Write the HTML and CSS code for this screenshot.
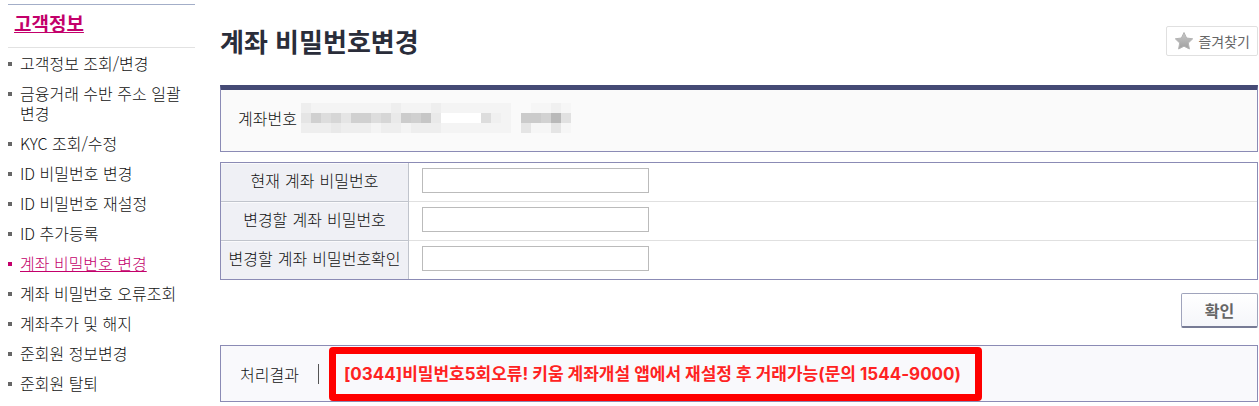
FILE: index.html
```
<!DOCTYPE html>
<html lang="ko">
<head>
  <meta charset="UTF-8">
  <meta name="viewport" content="width=device-width, initial-scale=1.0">
  <title>계좌 비밀번호변경</title>
  <link rel="stylesheet" href="styles.css">
</head>
<body>

<div class="page">
  <nav class="sidebar">
    <h2><a href="#">고객정보</a></h2>
    <ul>
      <li><a href="#">고객정보 조회/변경</a></li>
      <li><a href="#">금융거래 수반 주소 일괄 변경</a></li>
      <li><a href="#">KYC 조회/수정</a></li>
      <li><a href="#">ID 비밀번호 변경</a></li>
      <li><a href="#">ID 비밀번호 재설정</a></li>
      <li><a href="#">ID 추가등록</a></li>
      <li class="on"><a href="#">계좌 비밀번호 변경</a></li>
      <li><a href="#">계좌 비밀번호 오류조회</a></li>
      <li><a href="#">계좌추가 및 해지</a></li>
      <li><a href="#">준회원 정보변경</a></li>
      <li><a href="#">준회원 탈퇴</a></li>
    </ul>
  </nav>

  <main class="content">
    <div class="title-row">
      <h1>계좌 비밀번호변경</h1>
      <button type="button" class="favorite">
        <svg width="20" height="20" viewBox="0 0 20 20">
          <defs>
            <linearGradient id="star" x1="0" y1="0" x2="0" y2="1">
              <stop offset="0" stop-color="#c9c9c9"/>
              <stop offset="1" stop-color="#9f9f9f"/>
            </linearGradient>
          </defs>
          <path d="M10 1.5 L12.6 7 L18.7 7.8 L14.3 12 L15.4 18 L10 15.2 L4.6 18 L5.7 12 L1.3 7.8 L7.4 7 Z" fill="url(#star)" stroke="#b4b4b4" stroke-linejoin="round"/>
        </svg>
        즐겨찾기
      </button>
    </div>

    <section class="account">
      <span>계좌번호</span>
      <!-- masked account number -->
      <svg class="mask" width="270" height="30" viewBox="0 0 27 3" shape-rendering="crispEdges">
        <path fill="#f4f4f4" d="M0 0h21v3h-21z"/>
        <path fill="#eeeeee" d="M0 0h1v1h-1zM9 0h1v1h-1zM13 0h1v1h-1zM0 2h7v1h-7zM8 2h2v1h-2zM11 2h3v1h-3z"/>
        <path fill="#e9e9e9" d="M3 2h1v1h-1zM9 1h1v1h-1zM13 1h1v1h-1z"/>
        <path fill="#e5e5e5" d="M0 1h1v1h-1zM4 1h1v1h-1z"/>
        <path fill="#dddddd" d="M2 1h1v1h-1zM7 1h1v1h-1z"/>
        <path fill="#d6d6d6" d="M3 1h1v1h-1zM8 1h1v1h-1z"/>
        <path fill="#d0d0d0" d="M1 1h1v1h-1zM5 1h2v1h-2zM11 1h1v1h-1z"/>
        <path fill="#cccccc" d="M10 1h1v1h-1z"/>
        <path fill="#c6c6c6" d="M12 1h1v1h-1z"/>
        <path fill="#ffffff" d="M14 1h4v1h-4z"/>
        <path fill="#dddddd" d="M18 1h1v1h-1z"/>
        <path fill="#f0f0f0" d="M19 1h1v1h-1z"/>
        <path fill="#f6f6f6" d="M23 0h2v1h-2zM26 0h1v1h-1zM23 2h2v1h-2zM26 2h1v1h-1z"/>
        <path fill="#f0f0f0" d="M25 0h1v1h-1z"/>
        <path fill="#e5e5e5" d="M22 2h1v1h-1zM25 2h1v1h-1z"/>
        <path fill="#cbcbcb" d="M22 1h2v1h-2z"/>
        <path fill="#d2d2d2" d="M24 1h1v1h-1z"/>
        <path fill="#b9b9b9" d="M25 1h1v1h-1z"/>
        <path fill="#e1e1e1" d="M26 1h1v1h-1z"/>
      </svg>
    </section>

    <form>
      <table class="fields">
        <tr>
          <th><label for="pw-now">현재 계좌 비밀번호</label></th>
          <td><input type="password" id="pw-now"></td>
        </tr>
        <tr>
          <th><label for="pw-new">변경할 계좌 비밀번호</label></th>
          <td><input type="password" id="pw-new"></td>
        </tr>
        <tr>
          <th><label for="pw-check">변경할 계좌 비밀번호확인</label></th>
          <td><input type="password" id="pw-check"></td>
        </tr>
      </table>
      <div class="actions">
        <button type="button" class="confirm">확인</button>
      </div>
    </form>

    <section class="result">
      <span class="result-label">처리결과</span>
      <strong class="message">[0344]비밀번호5회오류! 키움 계좌개설 앱에서 재설정 후 거래가능(문의 1544-9000)</strong>
    </section>
  </main>
</div>

</body>
</html>
```
FILE: styles.css
```
* {
  box-sizing: border-box;
}

body {
  margin: 0;
  background: #fff;
  color: #111;
  font-family: "Noto Sans CJK KR", sans-serif;
  font-size: 16px;
  font-weight: 300;
  line-height: 20px;
}

button, input {
  font-family: inherit;
}

.page {
  display: flex;
  gap: 25px;
  padding: 4px 1px 4px 8px;
}

/* left menu */
.sidebar {
  flex: 0 0 187px;
}

.sidebar h2 {
  margin: 0;
  padding: 4px 6px 11px;
  border-top: 1px solid #a3aec8;
  border-bottom: 1px solid #e2e2e2;
  font-size: 19px;
  line-height: 27px;
}

.sidebar h2 a {
  color: #c3006b;
}

.sidebar ul {
  list-style: none;
  margin: 0;
  padding: 0;
}

.sidebar li {
  display: flex;
  gap: 8px;
  padding: 5px 0;
  word-break: keep-all;
}

.sidebar li::before {
  content: "";
  flex: 0 0 4px;
  height: 4px;
  margin-top: 9px;
  background: #666;
}

.sidebar li a {
  color: #111;
  text-decoration: none;
}

.sidebar li.on::before {
  background: #c3006b;
}

.sidebar li.on a {
  color: #c3006b;
  text-decoration: underline;
}

/* content */
.content {
  flex: 1;
  min-width: 0;
}

.title-row {
  display: flex;
  justify-content: space-between;
  align-items: center;
  padding: 20px 0 27px;
}

h1 {
  margin: 0;
  color: #2a2d3a;
  font-size: 26px;
  font-weight: 700;
  line-height: 34px;
}

.favorite {
  display: flex;
  align-items: center;
  gap: 4px;
  height: 30px;
  padding: 0 7px;
  border: 1px solid #e0e0e0;
  border-radius: 2px;
  background: #fff;
  color: #666;
  font-size: 14px;
  font-weight: 400;
}

.account {
  display: flex;
  align-items: center;
  gap: 4px;
  padding: 13px 17px 18px;
  border: 1px solid #8b8bb5;
  border-top: 5px solid #454a75;
  background: #fafafa;
}

.fields {
  width: 100%;
  margin-top: 10px;
  border: 1px solid #8b8bb5;
  border-collapse: separate;
  border-spacing: 0;
}

.fields th {
  width: 188px;
  height: 39px;
  padding: 0;
  border-right: 1px solid #c0c4cc;
  border-bottom: 1px solid #c0c4cc;
  background: #eff0f5;
  box-shadow: inset 0 1px #fafafc;
  font-family: "DejaVu Sans", "Noto Sans CJK KR", sans-serif;
  font-weight: 300;
}

.fields td {
  padding: 0 13px 4px;
  border-bottom: 1px solid #e0e0e0;
}

.fields tr:last-child th,
.fields tr:last-child td {
  height: 38px;
  border-bottom: 0;
}

.fields input {
  display: block;
  width: 227px;
  height: 25px;
  padding: 0 4px;
  border: 1px solid #bbb;
  background: #fff;
}

.actions {
  display: flex;
  justify-content: flex-end;
  padding: 13px 0 17px;
}

.confirm {
  width: 77px;
  height: 35px;
  padding: 0;
  border: 1px solid #a0a4bc;
  border-bottom: 2px solid #777b95;
  border-radius: 2px;
  background: linear-gradient(#fff, #f5f6fa);
  color: #666;
  font-size: 16px;
  font-weight: 700;
}

.result {
  display: flex;
  align-items: center;
  padding: 1px 0 0 19px;
  border: 1px solid #8b8bb5;
  background: #f9f9fc;
}

.result-label {
  padding-right: 19px;
  border-right: 1px solid #555;
}

.message {
  margin-left: 10px;
  padding: 10px 14px 10px 8px;
  border: 7px solid #f00;
  border-radius: 4px;
  color: #f22;
  font-family: Inter, "Noto Sans CJK KR", sans-serif;
  font-size: 17px;
  font-weight: 700;
}
```
